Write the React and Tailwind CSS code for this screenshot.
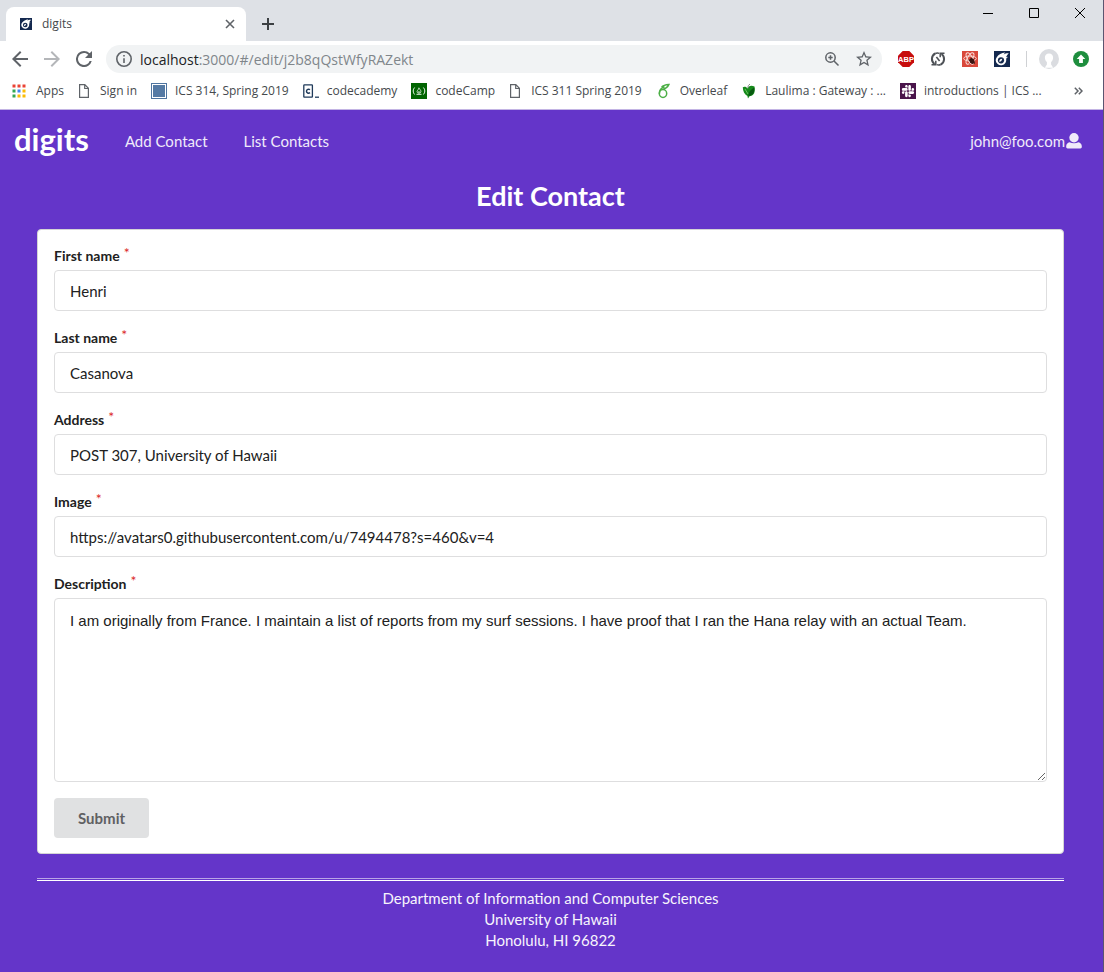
import React from "react";
import { FaSlack } from "react-icons/fa";

function CometIcon({ className }) {
  return (
    <svg viewBox="0 0 16 16" className={className} aria-hidden="true">
      <rect width="16" height="16" fill="#14294f" />
      <path d="M14.800 2.200C12.500 2.100 11 2.600 9.600 3.400l1.500-1.900C7.500 2 4.500 3.600 2.900 6A5.300 5.300 0 0 0 3.600 13a5.200 5.200 0 0 0 7.900-1.300c.8-1.400.9-2.700.6-3.900l1.900-2-1.900.5c.5-1.500 1.300-2.900 2.700-4.100z" fill="#fff" />
      <circle cx="7" cy="9.300" r="3.100" fill="#14294f" />
      <path d="M5.300 10.800c-.2-2.200 1.200-3.200 3.200-3.100-.8.900-.5 2.700-3.200 3.100z" fill="#fff" />
    </svg>
  );
}

function AppsIcon() {
  const colors = ["#ea4335", "#ea4335", "#ea4335", "#34a853", "#4285f4", "#fbbc05", "#34a853", "#fbbc05", "#fbbc05"];
  return (
    <svg viewBox="0 0 14 14" className="w-[14px] h-[14px]" aria-hidden="true">
      {colors.map((c, i) => (
        <rect key={i} x={(i % 3) * 5 + 0.5} y={Math.floor(i / 3) * 5 + 0.5} width="3" height="3" fill={c} />
      ))}
    </svg>
  );
}

function PageIcon() {
  return (
    <svg viewBox="0 0 12 16" className="w-[12px] h-4" fill="none" stroke="#5f6368" strokeWidth="1.200" aria-hidden="true">
      <path d="M1.600 1.600h5.200l3.600 3.700v9.100H1.600zM6.700 1.600v3.900h3.700" />
    </svg>
  );
}

function CourseIcon() {
  return (
    <svg viewBox="0 0 16 16" className="w-4 h-4" aria-hidden="true">
      <rect x=".5" y=".5" width="15" height="15" fill="#fff" stroke="#4f75a0" />
      <rect x="2" y="2" width="12" height="12" fill="#557aa4" />
    </svg>
  );
}

function CodecademyIcon() {
  return (
    <svg viewBox="0 0 16 16" className="w-4 h-4" fill="none" stroke="#1f3a5a" aria-hidden="true">
      <rect x=".8" y="1.800" width="8.600" height="12.400" rx=".6" strokeWidth="1.300" />
      <path d="M7 6.700c-1.400-1-3.500-.4-3.500 1.500s2.100 2.500 3.500 1.400" strokeWidth="1.500" />
      <path d="M12 14.200h4" strokeWidth="1.300" />
    </svg>
  );
}

function CodeCampIcon() {
  return (
    <svg viewBox="0 0 16 16" className="w-4 h-4" fill="none" stroke="#e6f2e6" aria-hidden="true">
      <rect width="16" height="16" fill="#006400" stroke="none" />
      <path d="M3.600 4.500c-1.900 2-1.900 5 0 7M12.400 4.500c1.900 2 1.900 5 0 7" />
      <path d="M5.500 11.300h5" />
      <path d="M7.900 4.800c.7 1.700 2.200 2.300 2 4-.1.800-.8 1.400-1.500 1.500.4-.8.100-1.500-.5-2-.2.800-.8 1.100-.3 2-1-.2-1.500-.9-1.500-1.800.1-1.300 1.600-1.700 1.800-3.700z" strokeWidth=".8" />
    </svg>
  );
}

function OverleafIcon() {
  return (
    <svg viewBox="0 0 16 16" className="w-4 h-4" fill="none" stroke="#4caf46" strokeWidth="1.500" aria-hidden="true">
      <ellipse cx="7" cy="10.500" rx="3.700" ry="3.900" />
      <path d="M3.400 10.800C3.200 6.800 5 4.900 8.500 3.700M5.600 4.100C7.500 2 10 1.800 12.800 1.600 11.700 3.800 10 5.600 7.300 5.900" />
    </svg>
  );
}

function LaulimaIcon() {
  return (
    <svg viewBox="0 0 16 16" className="w-4 h-4" aria-hidden="true">
      <path d="M1.800 4.300C3.500 3.300 5.400 3.800 6.600 5.500c.7-2.400 3.400-3.500 6.900-2 .6 3.500.3 6.500-1.300 8.100-1 1-2.300 1.500-3.700 1.700L7 15.600l-.6-2.700C3.400 11.400 1.900 8.400 1.800 4.300z" fill="#168a1b" />
      <path d="M7.500 13c-.2-3 1.400-6 5.800-8.500.6 4.500-1.300 8-5.800 8.500z" fill="#075a10" />
      <path d="m4 6 3 5" stroke="#68c25c" />
      <path d="M7 5.300C6.700 3.300 7.500 1.800 9 1.200" stroke="#8a8f8a" fill="none" />
    </svg>
  );
}

function SlackIcon() {
  return (
    <span className="flex h-4 w-4 items-center justify-center bg-[#4a154b] text-white">
      <FaSlack size={14} aria-hidden="true" />
    </span>
  );
}

const bookmarks = [
  ["Apps", <AppsIcon />, "w-4"],
  ["Sign in", <PageIcon />, "w-[14px]"],
  ["ICS 314, Spring 2019", <CourseIcon />, "w-4"],
  ["codecademy", <CodecademyIcon />, "w-4"],
  ["codeCamp", <CodeCampIcon />, "w-4"],
  ["ICS 311 Spring 2019", <PageIcon />, "w-[14px]"],
  ["Overleaf", <OverleafIcon />, "w-4"],
  ["Laulima : Gateway : ...", <LaulimaIcon />, "w-4"],
  ["introductions | ICS ...", <SlackIcon />, "w-4"],
];

function TabStrip() {
  return (
    <div className="flex h-[41px] items-start bg-[#dee1e6]">
      <div className="ml-[6px] mt-[7px] flex h-[34px] w-[240px] items-center rounded-t-lg bg-white pl-[14px] pr-[10px]">
        <CometIcon className="h-3 w-3" />
        <span className="ml-[10px] flex-1 text-[12px] text-[#45494d]">digits</span>
        <button aria-label="Close tab" className="flex h-3 w-3 items-center justify-center">
          <svg viewBox="0 0 10 10" className="h-[10px] w-[10px]" stroke="#5f6368" strokeWidth="1.600">
            <path d="m1 1 8 8M9 1 1 9" />
          </svg>
        </button>
      </div>
      <button aria-label="New tab" className="ml-4 mt-[18px]">
        <svg viewBox="0 0 12 12" className="h-3 w-3" stroke="#3c4043" strokeWidth="2">
          <path d="M6 0v12M0 6h12" />
        </svg>
      </button>
      <div className="ml-auto mr-[18px] mt-2 flex gap-9 text-black">
        <button aria-label="Minimize">
          <svg viewBox="0 0 10 10" className="h-[10px] w-[10px]" stroke="currentColor"><path d="M0 5.500h10" /></svg>
        </button>
        <button aria-label="Maximize">
          <svg viewBox="0 0 10 10" className="h-[10px] w-[10px]" stroke="currentColor" fill="none"><path d="M.5.5h9v9h-9z" /></svg>
        </button>
        <button aria-label="Close">
          <svg viewBox="0 0 10 10" className="h-[10px] w-[10px]" stroke="currentColor"><path d="m0 0 10 10M10 0 0 10" /></svg>
        </button>
      </div>
    </div>
  );
}

function Toolbar() {
  return (
    <div className="flex h-9 items-center pl-3 pr-[14px] text-[#5f6368]">
      <button aria-label="Back">
        <svg viewBox="4 4 16 16" className="h-4 w-4" fill="currentColor"><path d="M20 11H7.830l5.590-5.590L12 4l-8 8 8 8 1.410-1.410L7.830 13H20z" /></svg>
      </button>
      <button aria-label="Forward" className="ml-4 text-[#b4b6b9]">
        <svg viewBox="4 4 16 16" className="h-4 w-4" fill="currentColor"><path d="m12 4-1.410 1.410L16.170 11H4v2h12.170l-5.580 5.590L12 20l8-8z" /></svg>
      </button>
      <button aria-label="Reload" className="ml-4">
        <svg viewBox="4 4 16 16" className="h-4 w-4" fill="currentColor"><path d="M17.650 6.350A7.960 7.960 0 0 0 12 4a8 8 0 1 0 7.730 10h-2.080A6 6 0 1 1 12 6c1.660 0 3.140.69 4.220 1.780L13 11h7V4z" /></svg>
      </button>
      <div className="ml-[14px] flex h-7 flex-1 items-center rounded-full bg-[#f1f3f4] pl-[10px] pr-[10px]">
        <svg viewBox="2 2 20 20" className="h-4 w-4 shrink-0" fill="currentColor" aria-hidden="true">
          <path d="M11 17h2v-6h-2zm1-15a10 10 0 1 0 0 20 10 10 0 0 0 0-20zm0 18a8 8 0 1 1 0-16 8 8 0 0 1 0 16zM11 9h2V7h-2z" />
        </svg>
        <span className="ml-2 flex-1 text-[14px] text-[#80868b]">
          <span className="text-[#202124]">localhost</span>:3000/#/edit/j2b8qQstWfyRAZekt
        </span>
        <button aria-label="Zoom">
          <svg viewBox="0 0 16 16" className="h-4 w-4" fill="none" stroke="currentColor" strokeWidth="1.500">
            <circle cx="6.500" cy="6.500" r="4.700" />
            <path d="m10 10 4.500 4.500M4.300 6.500h4.400M6.500 4.300v4.400" />
          </svg>
        </button>
        <button aria-label="Bookmark this page" className="ml-4">
          <svg viewBox="2 2 20 20" className="h-4 w-4" fill="currentColor"><path d="m22 9.240-7.190-.62L12 2 9.190 8.630 2 9.240l5.460 4.730L5.820 21 12 17.270 18.180 21l-1.630-7.030zM12 15.400l-3.760 2.270 1-4.280-3.320-2.880 4.380-.38L12 6.100l1.710 4.040 4.380.38-3.320 2.880 1 4.280z" /></svg>
        </button>
      </div>
      <div className="ml-4 flex items-center gap-4">
        <svg viewBox="0 0 16 16" className="h-4 w-4" aria-hidden="true">
          <path d="M4.700 0h6.600L16 4.700v6.600L11.300 16H4.700L0 11.300V4.700z" fill="#c70d0d" />
          <text x="8" y="10.800" textAnchor="middle" fontSize="7.500" fontWeight="bold" fill="#fff" fontFamily="Liberation Sans, sans-serif">ABP</text>
        </svg>
        <svg viewBox="0 0 16 16" className="h-4 w-4" fill="none" stroke="#4d5156" strokeWidth="2" aria-hidden="true">
          <path d="M4.500 13A6.200 6.200 0 0 1 5.200 2.500M11.500 3a6.200 6.200 0 0 1-.7 10.500" />
          <path d="M1.500 13.700h4.300V9.800M14.500 2.300h-4.300v3.900" strokeWidth="1.500" />
          <path d="M5.200 2.500c1.800-.9 3-.7 4 0M10.800 13.500c-1.800.9-3 .7-4 0" strokeWidth="1.500" />
          <path d="m6.400 6 3.200 4" strokeWidth="1.600" />
        </svg>
        <svg viewBox="0 0 16 16" className="h-4 w-4" fill="none" aria-hidden="true">
          <rect width="16" height="16" fill="#d9483b" />
          <g stroke="#f9dcd8" strokeWidth="1">
            <ellipse cx="8" cy="7.500" rx="6.300" ry="2.500" />
            <ellipse cx="8" cy="7.500" rx="6.300" ry="2.500" transform="rotate(60 8 7.500)" />
            <ellipse cx="8" cy="7.500" rx="6.300" ry="2.500" transform="rotate(120 8 7.500)" />
          </g>
          <ellipse cx="10" cy="10" rx="2.300" ry="3" fill="#3b1512" transform="rotate(-35 10 10)" />
          <path d="m6.500 9 6.500 3M9 6.500l3.500 6.500M7.500 12.500l5-5" stroke="#3b1512" strokeWidth=".8" />
        </svg>
        <CometIcon className="h-4 w-4" />
      </div>
      <div className="ml-4 h-4 w-px bg-[#cfd1d4]" />
      <svg viewBox="0 0 20 20" className="ml-3 h-5 w-5" aria-hidden="true">
        <circle cx="10" cy="10" r="10" fill="#dadce0" />
        <path d="M10 4.500c-2.600 0-4.200 1.900-4.100 4.300.1 1.900.8 3.300 2 4.300v2.300L5.800 18.700h8.400l-2.100-3.300v-2.300c1.200-1 1.900-2.400 2-4.300.1-2.400-1.500-4.300-4.100-4.300z" fill="#fff" />
      </svg>
      <button aria-label="Update available" className="ml-[14px]">
        <svg viewBox="0 0 16 16" className="h-4 w-4">
          <circle cx="8" cy="8" r="8" fill="#1e8e3e" />
          <path d="M8 3.600 12.300 8H9.900v4H6.100V8H3.700z" fill="#fff" />
        </svg>
      </button>
    </div>
  );
}

function BookmarksBar() {
  return (
    <div className="flex h-[33px] items-center border-b border-[#c3b4e4] pb-1 pl-3 pr-5">
      <nav className="flex min-w-0 flex-1 items-center gap-[14px] text-[12px] text-[#45494d]">
        {bookmarks.map(([name, icon, iconWidth]) => (
          <a key={name} href="#" className="flex items-center gap-2 whitespace-nowrap">
            <span className={iconWidth + " shrink-0"}>{icon}</span>
            {name}
          </a>
        ))}
      </nav>
      <button aria-label="More bookmarks">
        <svg viewBox="0 0 9 8" className="h-2 w-[9px]" fill="none" stroke="#5f6368" strokeWidth="1.500">
          <path d="m.8.800L4 4 .8 7.200M4.800.800 8 4 4.800 7.200" />
        </svg>
      </button>
    </div>
  );
}

function Field({ id, label, children }) {
  return (
    <div className="mb-4">
      <label htmlFor={id} className="mb-1 flex h-[21px] items-center text-[14px] font-bold text-[#212121]">
        {label}
        <span className="mb-[6px] ml-1 font-normal text-[#db2828]">*</span>
      </label>
      {children}
    </div>
  );
}

const fields = [
  ["firstName", "First name", "Henri"],
  ["lastName", "Last name", "Casanova"],
  ["address", "Address", "POST 307, University of Hawaii"],
  ["image", "Image", "https://avatars0.githubusercontent.com/u/7494478?s=460&v=4"],
];

export default function App() {
  return (
    <div className="flex min-h-screen flex-col border-r border-[#5b5570] bg-[#6435c9] font-[Lato,sans-serif]">
      <header className="bg-white font-['Open_Sans',sans-serif]">
        <TabStrip />
        <Toolbar />
        <BookmarksBar />
      </header>

      <nav className="flex h-[62px] items-center pl-[14px] pr-[21px] text-[15px] text-[#f0eafa]">
        <a href="#" className="mb-1 text-[31px] font-bold text-white">digits</a>
        <a href="#" className="ml-9">Add Contact</a>
        <a href="#" className="ml-9">List Contacts</a>
        <button className="ml-auto flex items-center gap-px">
          john@foo.com
          <svg viewBox="0 0 16 16" className="h-4 w-4" fill="currentColor" aria-hidden="true">
            <circle cx="8" cy="4.800" r="4.700" />
            <path d="M3.600 9.200C1.500 9.700.2 11.200.2 13.200v.8c0 .9.600 1.400 1.400 1.400h12.800c.8 0 1.400-.5 1.400-1.400v-.8c0-2-1.300-3.500-3.400-4-2.500 1.500-6.300 1.500-8.800 0z" />
          </svg>
        </button>
      </nav>

      <main className="pl-[37px] pr-[39px]">
        <h1 className="pt-[6px] text-center text-[27px] font-bold leading-[36px] text-white">Edit Contact</h1>
        <form className="mt-[15px] rounded border border-[#d4d4d5] bg-white px-4 py-[15px]" onSubmit={(e) => e.preventDefault()}>
          {fields.map(([id, label, value]) => (
            <Field key={id} id={id} label={label}>
              <input
                id={id}
                defaultValue={value}
                className="block h-[41px] w-full rounded border border-[#dededf] px-[15px] text-[15px] text-[#212121] outline-none"
              />
            </Field>
          ))}
          <Field id="description" label="Description">
            <textarea
              id="description"
              defaultValue="I am originally from France. I maintain a list of reports from my surf sessions. I have proof that I ran the Hana relay with an actual Team."
              className="block h-[184px] w-full resize rounded border border-[#dededf] px-[15px] py-3 font-['Liberation_Sans',sans-serif] text-[15px] leading-5 text-[#212121] outline-none"
            />
          </Field>
          <button type="submit" className="h-10 rounded bg-[#e0e1e2] px-6 text-[15px] font-bold text-[#5f6062]">Submit</button>
        </form>
      </main>

      <footer className="pb-5 pl-[37px] pr-[39px] pt-6 text-center text-[15px] leading-[21px] text-[#f7f4fc]">
        <hr className="mb-[7px] h-[3px] border-b border-t border-b-white border-t-[#b9a5e6]" />
        Department of Information and Computer Sciences
        <br />
        University of Hawaii
        <br />
        Honolulu, HI 96822
      </footer>
    </div>
  );
}
